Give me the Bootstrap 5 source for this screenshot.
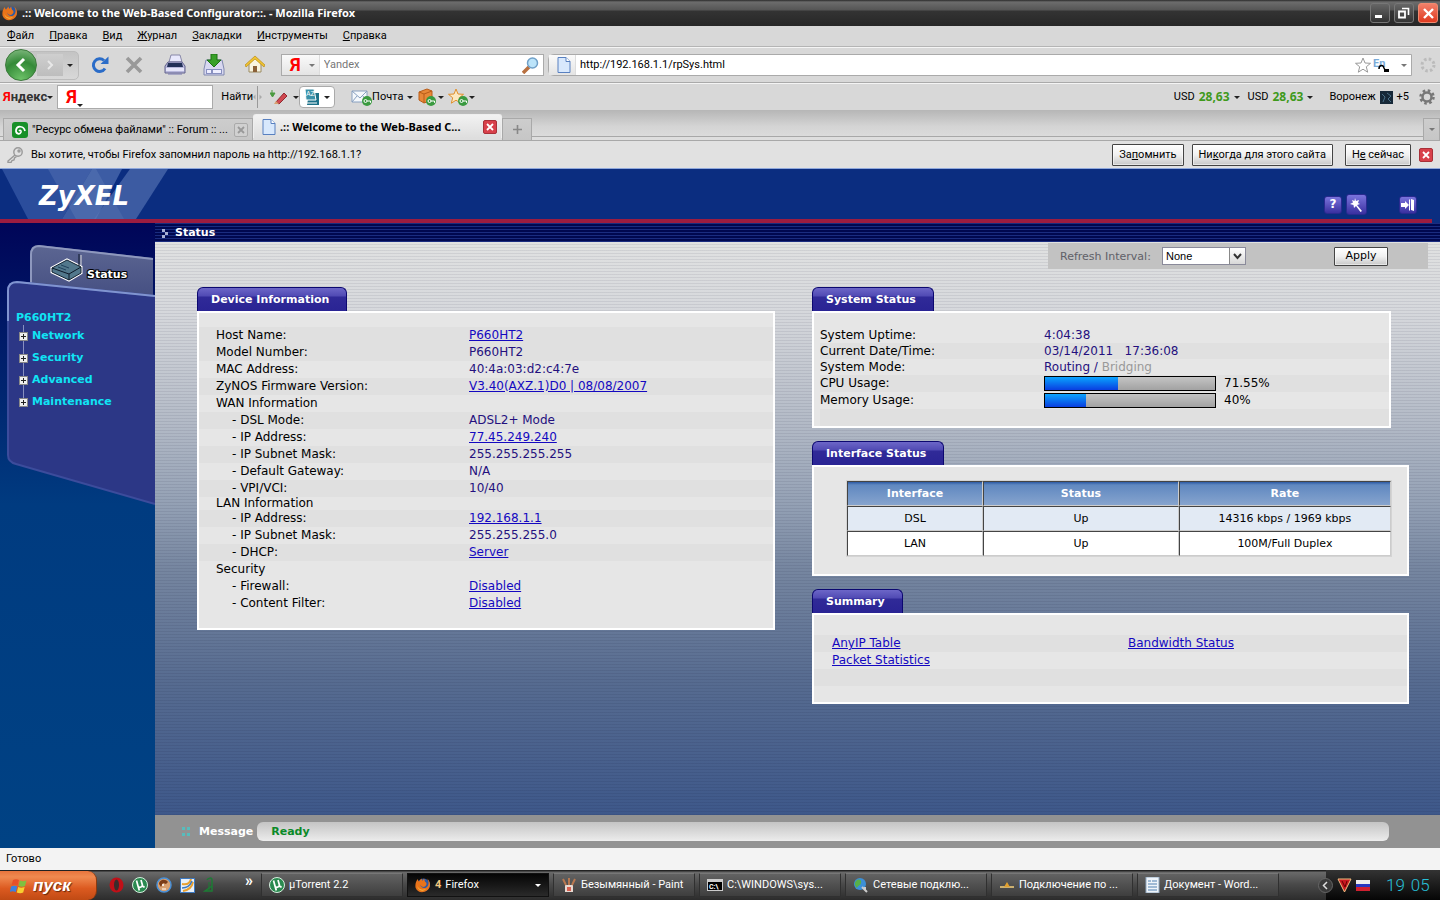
<!DOCTYPE html>
<html lang="ru">
<head>
<meta charset="utf-8">
<meta name="viewport" content="width=device-width, initial-scale=1">
<title>.:: Welcome to the Web-Based Configurator::.</title>
<link rel="stylesheet" href="https://cdn.jsdelivr.net/npm/bootstrap@5.3.0/dist/css/bootstrap.min.css">
<style>
body{font:11px/14px Roboto,"Liberation Sans",sans-serif;color:#000;background:#d8d8d8;min-height:100vh}
svg{flex:none;display:block}
button{font:inherit}
.plain{border:0;background:none;padding:0;color:inherit;display:flex;align-items:center}
.arr{width:0;height:0;border:3px solid transparent;border-top:3px solid #222;border-bottom:0;flex:none}
.arr.dim{border-top-color:#777}

/* window frame */
.titlebar{height:26px;background:linear-gradient(#2a2a2a 0,#6c6c6c 2px,#555 10px,#333 11px,#272727);color:#fff;font:bold 11px/14px "Noto Sans",sans-serif;padding:0 2px}
.wbtn{width:20px;height:20px;border:1px solid #777;border-radius:3px;background:linear-gradient(#666,#333);justify-content:center}
.wbtn.close-w{border-color:#f08a70;background:linear-gradient(#f0806a,#e03a20)}
.menus{height:21px;padding-left:7px;gap:15px;border-bottom:1px solid #b4b4b4}
.menus a{color:#000;text-decoration:none}
.navtools{height:36px;border-top:1px solid #f4f4f4;border-bottom:1px solid #aaa;padding:0 4px 0 6px}
.backpill{height:29px;border:1px solid #bcbcbc;border-radius:14px 5px 5px 14px;background:linear-gradient(#c4c4c4,#d8d8d8);width:73px;gap:0}
.backbtn{width:32px;height:32px;border-radius:50%;border:1px solid #3c7a3c;background:radial-gradient(circle at 50% 100%,#6fc46a,#348a38 55%,#8cc08a);justify-content:center;flex:none;margin-left:-2px}
.fwdbtn{width:26px;height:22px;justify-content:center;background:linear-gradient(#cfcfcf,#bdbdbd)}
.field{height:22px;border:1px solid #aaa;background:#fff}
.field input{border:0;outline:0;background:none;padding:0;min-width:0;font:inherit;color:#000}
.field input::placeholder{color:#777;opacity:1}
.searchbox{width:263px}
.chip{height:20px;background:linear-gradient(#fafafa,#e4e4e4);border-right:1px solid #ddd}
.ya-y{color:#f00;font:18px/20px "Liberation Sans Narrow",Roboto,sans-serif}
.yabar{height:27px;border-top:1px solid #f4f4f4;padding:0 3px}
.yabox{width:156px;height:24px}
.yalogo{font:bold 13px/20px "Liberation Sans Narrow",Roboto,sans-serif;color:#333}
.yalogo span{color:#f00}
.rate{color:#3f9a1c;font:bold 12px/14px "Noto Sans",sans-serif}
.tabstrip{height:30px;background:linear-gradient(#b6b6b6,#d4d4d4 60%,#dcdcdc);border-bottom:3px solid #dedede;box-shadow:inset 0 -1px 0 #a8a8a8;padding:4px 0 0 3px}
.btab{height:22px;border:1px solid #a9a9a9;border-bottom:0;background:linear-gradient(#cdcdcd,#c6c6c6)}
.btab.on{height:24px;border-color:#eee;background:linear-gradient(#f2f2f2,#dedede);font:bold 11px/14px "Noto Sans",sans-serif;border-radius:3px 3px 0 0}
.xred{width:14px;height:14px;border:1px solid #a83038;border-radius:2px;background:#d8404a;justify-content:center}
.xgray{width:14px;height:14px;border:1px solid #aaa;border-radius:2px;background:#d0d0d0;justify-content:center;color:#999}
.notif{height:29px;background:#e1e1e1;border-top:1px solid #a8a8a8;border-bottom:1px solid #8fa8dc;padding:0 7px}
.xpb{height:22px;border:1px solid #444;border-radius:1px;background:linear-gradient(#fff,#f0f0f0 50%,#c8c8c8);padding:0 6px;white-space:nowrap;color:#000;box-shadow:inset 0 0 0 1px #fff8}

/* configurator */
.cfg{font:12px/17px "DejaVu Sans",sans-serif}
.banner{height:54px;background:#0b2d80}
.banner .logoart{width:200px;height:50px}
.bannertools{padding-right:23px;gap:4px}
.redline{height:4px;background:#9c1c40;margin-right:8px}
.sq{width:18px;height:18px;border-radius:3px;background:linear-gradient(#7a74dc,#3a30a0);justify-content:center;border:1px solid #2a2a90}
.sq.big{width:21px;height:21px}
.side{width:155px;background:linear-gradient(#000558,#003b80 45%,#004284);flex:none}
.side .art{position:absolute;left:0;top:0;z-index:0}
.tree{position:relative;z-index:1;padding:84px 0 0 16px;font:bold 11px/22px "DejaVu Sans",sans-serif}
.tree ul{list-style:none;margin:-4px 0 0 3px;padding:0;position:relative}
.tree ul::before{content:"";position:absolute;left:4px;top:0;bottom:14px;width:1px;background:#8890c0}
.tree a,.tree div{color:#10e4f4;text-decoration:none}
.plus{position:relative;width:9px;height:9px;background:#eee;border:1px solid #888;color:#000}
.plus::before,.plus::after{content:"";position:absolute;background:#222;left:1px;top:3px;width:5px;height:1px}
.plus::after{left:3px;top:1px;width:1px;height:5px}
.crumb{height:19px;background:repeating-linear-gradient(#1a2c80 0 1px,#000850 1px 3px);color:#fff;font:bold 11px/19px "DejaVu Sans",sans-serif;padding-left:7px;gap:6px}
.stage{padding-top:1px;background:repeating-linear-gradient(#fff0 0 2px,#00002012 2px 3px),linear-gradient(#e0e1e1 0,#d6d8dc 12%,#b4bbc7 31%,#93a0b4 46%,#7686a0 57%,#566b90 77%,#3e588a 100%)}
.refresh{height:26px;width:380px;background:#c2c2c2;color:#606068;margin-right:12px;padding:0 40px 0 12px;font-size:11px}
.refresh label{width:102px}
.refresh .pick{width:84px;height:18px;border:1px solid #8a8a9a;background:#fff}
.refresh select{appearance:none;border:0;padding:0 0 0 3px;height:16px;width:66px;background:none;font:11px/14px "Liberation Sans",sans-serif;color:#000;outline:0}
.pick .dd{width:16px;height:16px;border-left:1px solid #888;background:linear-gradient(#fff,#d8d8d8)}
.apply{width:54px;height:19px;font:11px/16px "DejaVu Sans",sans-serif}
.boards{display:grid;grid-template-columns:578fr 597fr;column-gap:37px;padding:18px 31px 0 42px}
.tabhead{display:inline-block;height:24px;border:1px solid #0c0870;border-bottom:0;border-radius:6px 6px 0 0;background:linear-gradient(#6c66c8 0,#504ab4 8px,#302a98 9px,#2a2494);color:#fff;font:bold 11px/24px "DejaVu Sans",sans-serif;padding:0 17px 0 13px;vertical-align:top}
.board{border:2px solid #fff;background:#e6e6e6;margin-bottom:13px}
.b-device{padding:14px 0 16px}
.b-system{padding:14px 0 0 6px;margin-right:18px}
.b-iface{padding-bottom:17px}
.b-sum{padding:20px 0 16px}
.info{width:100%;border-collapse:collapse}
.info th,.info td{padding:0;font-weight:400;height:17px;line-height:17px}
.info th{text-align:left;color:#000}
.info td{color:#24107e}
.cfg a.lnk{color:#1408c0}
.info .dk{background:#e0e0e0}
.info .lo th,.info .lo td{height:13px;line-height:13px}
.sys tr.s th,.sys tr.s td{height:16px;line-height:16px}
.off{color:#999}
.meter{width:172px;height:15px;border:1px solid #000;background:linear-gradient(#c4c4c4,#a2a2a2)}
.meter div{height:100%;background:linear-gradient(#0aa4ff,#0a3ee0)}
.iface{width:calc(100% - 47px);margin:13px 15px 0 32px;border-collapse:separate;border-spacing:0;border:1px solid #d4d4d4;background:#fff;text-align:center;font-size:11px}
.iface th,.iface td{border:1px solid #ccc;border-top-color:#444;border-left-color:#444;height:25px;padding:0}
.iface th{background:linear-gradient(#2c5aa4 0,#6088c0 3px,#86a4ce);color:#fff}
.iface .alt{background:#e2eaf4}
.msgbar{height:33px;background:#929292;color:#fff;font:bold 11px/17px "DejaVu Sans",sans-serif;padding:0 51px 0 27px}
.msgtext{height:19px;border-radius:6px;background:linear-gradient(#c4c4c4,#ececec);color:#0a8a28;padding-left:14px;line-height:20px}
.dots{width:9px;height:9px;display:grid;grid-template-columns:3px 3px;gap:2px}
.dots i{background:#58bcbc;height:3px}

/* status bar and taskbar */
.statusline{height:22px;background:#f3f3f3;padding:0 6px}
.taskbar{height:30px;background:linear-gradient(#222 0,#222 1px,#6a6a6a 2px,#4a4a4a 14px,#2c2c2c);color:#fff}
.startb{width:97px;height:29px;margin-top:1px;background:linear-gradient(#e8743c,#f08a50 20%,#dc5a20 60%,#c04a14);border-radius:0 9px 9px 0;border-right:1px solid #8a3a10;color:#fff;font:italic bold 17px/22px "Liberation Sans",sans-serif;gap:5px;padding-left:10px;text-shadow:1px 1px 1px #0008}
.task{height:24px;flex:1 1 0;min-width:0;background:linear-gradient(#626262,#3e3e3e);border:1px solid #303030;border-top-color:#777;color:#fff;padding:0 7px;display:flex;align-items:center;gap:4px;white-space:nowrap;text-align:left}
.task.on{background:linear-gradient(#050505,#2a2a2a);border-color:#111}
.task b{color:#f4c880}
.task .arr{border-top-color:#fff}
.tasks{width:1018px;gap:4px}
.tray{width:114px;height:30px;background:linear-gradient(#333,#050505);margin-left:auto}
.tray .plain{margin-left:-8px}
.clock{color:#28c0d8;font:300 17px/20px Roboto,sans-serif;gap:6px}
</style>
</head>
<body class="d-flex flex-column">
<svg width="0" height="0" class="position-absolute" aria-hidden="true">
  <symbol id="ff" viewBox="0 0 16 16"><circle cx="8.500" cy="8" r="6.500" fill="#2a5aa8"/><path d="M9 1.500c1 1 0 3 2 4 1 1 .5 3-1 4-2 1-4 0-5-2 1 4 6 5 8 1 1-2 .6-5-1-7 4 3 4 9 0 12-4 3-10 2-11.500-3C0 7 1 4 3 2c0 1 .2 2 1 2.500 1-.8 1-2 3-3-.4 1-.2 1.700.4 2.200C8 3.200 8.500 2.500 9 1.500z" fill="#e8731a"/><path d="M2 8c1 4 5 6 9 4-3 3-8 2-9-4z" fill="#f8c040"/></symbol>
  <symbol id="page" viewBox="0 0 14 16"><path d="M1 .5h8l4 4v11H1z" fill="#d8e8fc" stroke="#5880c0"/><path d="M9 .5v4h4" fill="#fff" stroke="#5880c0"/></symbol>
  <symbol id="xx" viewBox="0 0 8 8"><path d="M1 1l6 6M7 1L1 7" stroke="currentColor" stroke-width="1.800"/></symbol>
  <symbol id="key" viewBox="0 0 10 10"><circle cx="5" cy="5" r="5" fill="#3a9a40"/><circle cx="3.500" cy="5" r="1.500" fill="none" stroke="#fff"/><path d="M5 5h3.500v1.800" fill="none" stroke="#fff"/></symbol>
  <symbol id="ut" viewBox="0 0 16 16"><circle cx="8" cy="8" r="7.500" fill="#2a8a50" stroke="#d8f0e0"/><path d="M4.500 3.500l1.500 5.500c.6 2 3.300 1.600 4-.2M9 3l1.700 6c.3 1 1.200 1 2 .5M6 9l1.300 4.500" fill="none" stroke="#fff" stroke-width="1.700"/></symbol>
</svg>

<header>
  <div class="titlebar d-flex align-items-center">
    <svg width="16" height="16"><use href="#ff"/></svg>
    <span class="ms-1">.:: Welcome to the Web-Based Configurator::. - Mozilla Firefox</span>
    <div class="d-flex gap-1 ms-auto">
      <button class="plain wbtn" aria-label="Свернуть"><svg width="12" height="12"><path d="M1 8h7v3H1z" fill="#fff"/></svg></button>
      <button class="plain wbtn" aria-label="Восстановить"><svg width="12" height="12" fill="none" stroke="#fff"><path d="M1 4.500h6v6H1z" stroke-width="1.800"/><path d="M4 1.500h6.500V8" stroke-width="1.600"/></svg></button>
      <button class="plain wbtn close-w" aria-label="Закрыть"><svg width="13" height="13"><path d="M2 2l9 9M11 2l-9 9" stroke="#fff" stroke-width="2.400"/></svg></button>
    </div>
  </div>
  <nav class="menus d-flex align-items-center">
    <a href="#"><u>Ф</u>айл</a><a href="#"><u>П</u>равка</a><a href="#"><u>В</u>ид</a><a href="#"><u>Ж</u>урнал</a><a href="#"><u>З</u>акладки</a><a href="#"><u>И</u>нструменты</a><a href="#"><u>С</u>правка</a>
  </nav>

  <div class="navtools d-flex align-items-center">
    <div class="backpill d-flex align-items-center">
      <button class="plain backbtn" aria-label="Назад"><svg width="14" height="16"><path d="M10 2L4 8l6 6" fill="none" stroke="#fff" stroke-width="3"/></svg></button>
      <button class="plain fwdbtn" aria-label="Вперёд"><svg width="8" height="10"><path d="M2 1l4 4-4 4" fill="none" stroke="#e8e8e8" stroke-width="2"/></svg></button>
      <span class="arr ms-1"></span>
    </div>
    <button class="plain ms-2 ps-1" aria-label="Обновить"><svg width="18" height="18"><path d="M14 12.500A6.300 6.300 0 1 1 13 4.500" fill="none" stroke="#2a6cc8" stroke-width="3"/><path d="M9.500 8h8V.5z" fill="#2a6cc8"/></svg></button>
    <button class="plain ms-3" aria-label="Остановить"><svg width="18" height="18"><path d="M2 2l14 14M16 2L2 16" stroke="#999" stroke-width="3.600"/></svg></button>
    <button class="plain ms-3 ps-1" aria-label="Печать"><svg width="24" height="22"><path d="M6 8l2-7h9l2 7z" fill="#e8e8fc" stroke="#8888a8"/><path d="M5 8h14l3 4v7H2v-7z" fill="#b8b8dc" stroke="#62628c"/><path d="M5 9h14l1 4H4z" fill="#223058"/><path d="M3 14h18v3H3z" fill="#e6e6fa"/><path d="M5 20h14" stroke="#7878b0"/></svg></button>
    <button class="plain ms-3" aria-label="Сохранить"><svg width="22" height="22"><path d="M3 6h16l2 9v6H1v-6z" fill="#d8d8f0" stroke="#8088b0"/><path d="M3 15h16v5H3z" fill="#8890c0"/><path d="M4 16h4v3H4zM10 16h8v3h-8z" fill="#eef"/><path d="M8 0h6v6h4l-7 7-7-7h4z" fill="#38a028" stroke="#1c7014"/></svg></button>
    <button class="plain ms-3 ps-1" aria-label="Домой"><svg width="20" height="20"><path d="M4 9v8h12V9l-6-6z" fill="#f8f4e0" stroke="#9a8a60"/><path d="M8 11h4v6H8z" fill="#8a6038"/><path d="M0 10L10 1l10 9-1 2-9-8-9 8z" fill="#f0c430" stroke="#b88a18" stroke-width=".7"/></svg></button>
    <div class="field searchbox d-flex align-items-center ms-3">
      <button class="plain chip ps-2 pe-1" aria-label="Поисковая система"><span class="ya-y fw-bold pe-2">Я</span><span class="arr dim"></span></button>
      <input class="flex-grow-1 ms-1" placeholder="Yandex" aria-label="Поиск">
      <svg class="me-1" width="17" height="17"><path d="M1 16l6-6" stroke="#b87040" stroke-width="3.500"/><circle cx="10.500" cy="6" r="5" fill="#bce4fa" stroke="#70a0c8" stroke-width="1.500"/></svg>
    </div>
    <div class="field d-flex align-items-center flex-grow-1 rounded-start ms-1">
      <span class="chip d-flex align-items-center ps-2 pe-1 me-1"><svg width="14" height="16"><use href="#page"/></svg></span>
      <input class="flex-grow-1" value="http://192.168.1.1/rpSys.html" aria-label="Адрес">
      <svg width="16" height="16"><path d="M8 1l2 5 5.500.300-4.200 3.500 1.400 5.400L8 12.200l-4.700 3L4.700 9.800.5 6.300 6 6z" fill="none" stroke="#999"/></svg>
      <svg class="me-2" width="22" height="20"><text x="2" y="12" font-size="11" font-weight="bold" fill="#7aaad8">En</text><path d="M8 14c0-4 4-5 5-1l1 2" fill="none" stroke="#000" stroke-width="1.500"/><path d="M13 14h5v3h-5z"/></svg>
      <span class="arr dim me-1"></span>
    </div>
    <svg class="ms-2" width="16" height="16"><circle cx="8" cy="8" r="6" fill="none" stroke="#bbb" stroke-width="3" stroke-dasharray="2.500 2.210"/></svg>
  </div>

  <div class="yabar d-flex align-items-center">
    <button class="plain"><span class="yalogo"><span>Я</span>ндекс</span><span class="arr"></span></button>
    <div class="field yabox d-flex align-items-center ms-1 ps-2">
      <span class="ya-y fw-bold">Я</span><span class="arr mt-3"></span><input class="flex-grow-1" aria-label="Яндекс поиск">
    </div>
    <button class="plain ms-2">Найти</button>
    <svg width="9" height="22"><path d="M4.500 0v22" stroke="#999"/><path d="M2.500 8.500L0 11l2.500 2.500zM6.500 8.500L9 11l-2.500 2.500z" fill="#aaa"/></svg>
    <button class="plain ms-2 gap-1" aria-label="Маркер"><svg width="19" height="18"><path d="M2 2v4M0 5h5L2.500 9z" fill="#4a9a40" stroke="#4a9a40"/><path d="M6 14l8-9 3 3-8 8z" fill="#d04850" stroke="#902830"/><path d="M4 16l2-3 3 3z" fill="#d8a070"/></svg><span class="arr"></span></button>
    <button class="plain field rounded-1 px-1 gap-1" aria-label="Словарь"><svg width="16" height="18"><path d="M5 5h10v12H3z" fill="#1c7088"/><path d="M1 1h9l2 11H2z" fill="#3a90a8" stroke="#fff"/><text x="2" y="8" font-size="7" fill="#fff">AZ</text><path d="M3 15h10" stroke="#fff"/></svg><span class="arr"></span></button>
    <button class="plain ms-3"><svg width="21" height="18"><path d="M1 3h15v11H1z" fill="#f4f8fc" stroke="#88a0c0"/><path d="M1 3l8 7 7-7M1 14l5-6M16 14l-4-6" fill="none" stroke="#88a0c0"/><use href="#key" x="11" y="8" width="10" height="10"/></svg><span class="pe-1">Почта</span><span class="arr"></span></button>
    <button class="plain ms-1" aria-label="Закладки"><svg width="21" height="18"><path d="M2 4l8-3 5 2v9l-8 3-5-3z" fill="#e88838" stroke="#b85c18"/><path d="M2 4l5 2 8-3M7 6v9" stroke="#b85c18" fill="none"/><use href="#key" x="9" y="8" width="10" height="10"/></svg><span class="arr"></span></button>
    <button class="plain ms-1" aria-label="Избранное"><svg width="21" height="18"><path d="M8 1l2 5 5.500.300-4.200 3.500 1.400 5.400L8 12.200l-4.700 3L4.700 9.800.5 6.300 6 6z" fill="#fce8c0" stroke="#e0902c"/><use href="#key" x="10" y="8" width="10" height="10"/></svg><span class="arr"></span></button>
    <div class="d-flex align-items-center ms-auto">
      <span>USD</span><span class="rate mx-1">28,63</span><span class="arr me-2"></span>
      <span>USD</span><span class="rate mx-1">28,63</span><span class="arr me-3"></span>
      <span>Воронеж</span>
      <svg class="mx-1" width="13" height="13"><path d="M0 0h13v13H0z" fill="#162838"/><path d="M2 3l3 3-2 5M7 2l4 3-3 3 3 3" stroke="#4a7088" fill="none"/></svg>
      <span class="me-2">+5</span>
      <svg width="20" height="16"><circle cx="10" cy="8" r="4.500" fill="none" stroke="#777" stroke-width="2.500"/><circle cx="10" cy="8" r="6.500" fill="none" stroke="#777" stroke-width="2.500" stroke-dasharray="2.550 2.550"/></svg>
    </div>
  </div>

  <div class="tabstrip d-flex">
    <div class="btab d-flex align-items-center ps-2 pe-1 mt-1" style="width:250px">
      <svg width="16" height="16"><path d="M0 3a3 3 0 0 1 3-3h10a3 3 0 0 1 3 3v10a3 3 0 0 1-3 3H3a3 3 0 0 1-3-3z" fill="#189028"/><path d="M13 9c-1-5-8-6-9-1-.4 4 4 5 5 2 .4-1.500-1-2-2-1" fill="none" stroke="#fff" stroke-width="1.700"/></svg>
      <span class="ms-1 flex-grow-1 text-nowrap">"Ресурс обмена файлами" :: Forum :: ...</span>
      <button class="plain xgray" aria-label="Закрыть вкладку"><svg width="8" height="8"><use href="#xx"/></svg></button>
    </div>
    <div class="btab on d-flex align-items-center ps-2 pe-1" style="width:249px">
      <svg width="14" height="16"><use href="#page"/></svg>
      <span class="ms-1 flex-grow-1 text-nowrap">.:: Welcome to the Web-Based C...</span>
      <button class="plain xred text-white" aria-label="Закрыть вкладку"><svg width="8" height="8"><use href="#xx"/></svg></button>
    </div>
    <button class="plain btab justify-content-center mt-1" style="width:30px" aria-label="Новая вкладка"><svg width="9" height="9"><path d="M4.500 0v9M0 4.500h9" stroke="#888" stroke-width="1.600"/></svg></button>
    <button class="plain btab justify-content-center ms-auto mt-1" style="width:17px" aria-label="Список вкладок"><span class="arr dim"></span></button>
  </div>

  <div class="notif d-flex align-items-center">
    <svg width="16" height="16" fill="none" stroke="#999" stroke-width="1.400"><circle cx="11" cy="5" r="4.200"/><path d="M8 8l-7 6v1.500h3l1-2 2-.5.5-2 2-1.500"/><circle cx="12" cy="4" r="1"/></svg>
    <span class="ms-2 me-auto">Вы хотите, чтобы Firefox запомнил пароль на http://192.168.1.1?</span>
    <button class="xpb">За<u>п</u>омнить</button>
    <button class="xpb mx-2"><span>Ни<u>к</u>огда для этого сайта</span></button>
    <button class="xpb ms-1">Н<u>е</u> сейчас</button>
    <button class="plain xred text-white ms-2" aria-label="Закрыть"><svg width="8" height="8"><use href="#xx"/></svg></button>
  </div>
</header>

<main class="cfg d-flex flex-column flex-grow-1">
  <div class="banner d-flex flex-column">
    <div class="d-flex justify-content-between align-items-end">
      <svg class="logoart" viewBox="0 0 200 50" role="img" aria-label="ZyXEL"><path d="M2 0h90l-30 50H28z" fill="#2b4d9c"/><path d="M92 0h30L96 50H62z" fill="#3c5ca4"/><path d="M48 0h48l28 50H76z" fill="#6c88c0" opacity=".3"/><path d="M130 0h38l-32 50H94z" fill="#5874b4" opacity=".65"/><text x="39" y="36" font-family="DejaVu Sans,sans-serif" font-size="26" font-weight="bold" font-style="italic" fill="#fff">ZyXEL</text></svg>
      <div class="bannertools d-flex align-items-center pb-1">
        <button class="plain sq text-white fw-bold" aria-label="Справка">?</button>
        <button class="plain sq big me-4" aria-label="Мастер"><svg width="15" height="15"><path d="M6 1l1 3 3-1-1 3 2 1-3 1 5 6-1.500 1L7 9l-2 2-.5-3L1 7l3-1.500L3 3l2.500 1z" fill="#fff"/></svg></button>
        <button class="plain sq ms-1" aria-label="Выход"><svg width="14" height="12"><path d="M0 4h4V2l4 4-4 4V8H0z" fill="#fff"/><path d="M8 .5h1v11H8zM10 0l3 1v11l-3-1z" fill="#fff"/></svg></button>
      </div>
    </div>
    <div class="redline"></div>
  </div>
  <div class="d-flex flex-grow-1">
    <aside class="side position-relative">
      <svg class="art" width="155" height="290" viewBox="0 0 155 290" aria-hidden="true">
        <defs><linearGradient id="g1" x2="0" y2="1"><stop stop-color="#5c6692"/><stop offset="1" stop-color="#3c467c"/></linearGradient></defs>
        <path d="M30 70V32q0-10 8-10l115 13v60z" fill="url(#g1)"/><path d="M31 62V32q0-9 8-9l114 13" fill="none" stroke="#8e98be" stroke-width="2"/>
        <path d="M8 232V68q0-9 9-9l138 14v208L16 241q-8-2-8-9z" fill="#2c3786"/><path d="M155 73L17 59q-9 0-9 9v164q0 7 8 9l139 40" fill="none" stroke="#3c4c9c" stroke-width="2"/><path d="M155 73L17 59q-9 0-9 9v30" fill="none" stroke="#8094d0" stroke-width="2"/>
        <path d="M52 45l15-8 14 7v6l-12 7-17-8z" fill="#52788c" stroke="#fff" stroke-width="3"/><path d="M52 45l15-8 14 7v6l-12 7-17-8z" fill="#52788c" stroke="#102030" stroke-width="1"/><path d="M52 45l17 6 12-7M69 51v6M79 43V31" fill="none" stroke="#0c1828"/><path d="M81 42V32" stroke="#ddd"/><path d="M58 44l8 3M61 42l8 3" stroke="#20405c"/>
        <text x="87" y="55" font-family="DejaVu Sans,sans-serif" font-weight="bold" font-size="11" fill="#fff" stroke="#000" stroke-width="2" paint-order="stroke">Status</text>
      </svg>
      <nav class="tree">
        <div>P660HT2</div>
        <ul>
          <li class="d-flex align-items-center gap-1"><span class="plus"></span><a href="#">Network</a></li>
          <li class="d-flex align-items-center gap-1"><span class="plus"></span><a href="#">Security</a></li>
          <li class="d-flex align-items-center gap-1"><span class="plus"></span><a href="#">Advanced</a></li>
          <li class="d-flex align-items-center gap-1"><span class="plus"></span><a href="#">Maintenance</a></li>
        </ul>
      </nav>
    </aside>
    <div class="d-flex flex-column flex-grow-1">
      <div class="crumb d-flex align-items-center"><svg width="7" height="10"><path d="M0 1h3v3H0zM3 4h3v3H3zM0 7h3v3H0z" fill="#a8b0d4"/></svg><span>Status</span></div>
      <div class="stage flex-grow-1">
        <div class="refresh d-flex align-items-center ms-auto">
          <label for="ri">Refresh Interval:</label>
          <div class="pick d-flex align-items-center"><select id="ri"><option>None</option></select><span class="dd d-flex align-items-center justify-content-center"><svg width="9" height="7"><path d="M1 1l3.500 4L8 1" fill="none" stroke="#333" stroke-width="2"/></svg></span></div>
          <button class="xpb apply ms-auto">Apply</button>
        </div>
        <div class="boards">
          <section>
            <h2 class="tabhead m-0">Device Information</h2>
            <div class="board b-device">
              <table class="info">
                <colgroup><col style="width:17px"><col style="width:253px"><col></colgroup>
                <tr class="dk"><td></td><th>Host Name:</th><td><a class="lnk" href="#">P660HT2</a></td></tr>
                <tr class="dk"><td></td><th>Model Number:</th><td>P660HT2</td></tr>
                <tr><td></td><th>MAC Address:</th><td>40:4a:03:d2:c4:7e</td></tr>
                <tr class="dk"><td></td><th>ZyNOS Firmware Version:</th><td><a class="lnk" href="#">V3.40(AXZ.1)D0 | 08/08/2007</a></td></tr>
                <tr><td></td><th>WAN Information</th><td></td></tr>
                <tr class="dk"><td></td><th class="ps-3">- DSL Mode:</th><td>ADSL2+ Mode</td></tr>
                <tr><td></td><th class="ps-3">- IP Address:</th><td><a class="lnk" href="#">77.45.249.240</a></td></tr>
                <tr class="dk"><td></td><th class="ps-3">- IP Subnet Mask:</th><td>255.255.255.255</td></tr>
                <tr><td></td><th class="ps-3">- Default Gateway:</th><td>N/A</td></tr>
                <tr class="dk"><td></td><th class="ps-3">- VPI/VCI:</th><td>10/40</td></tr>
                <tr class="lo"><td></td><th>LAN Information</th><td></td></tr>
                <tr class="dk"><td></td><th class="ps-3">- IP Address:</th><td><a class="lnk" href="#">192.168.1.1</a></td></tr>
                <tr><td></td><th class="ps-3">- IP Subnet Mask:</th><td>255.255.255.0</td></tr>
                <tr class="dk"><td></td><th class="ps-3">- DHCP:</th><td><a class="lnk" href="#">Server</a></td></tr>
                <tr><td></td><th>Security</th><td></td></tr>
                <tr><td></td><th class="ps-3">- Firewall:</th><td><a class="lnk" href="#">Disabled</a></td></tr>
                <tr><td></td><th class="ps-3">- Content Filter:</th><td><a class="lnk" href="#">Disabled</a></td></tr>
              </table>
            </div>
          </section>
          <div>
            <section>
              <h2 class="tabhead m-0">System Status</h2>
              <div class="board b-system">
                <table class="info sys">
                  <colgroup><col style="width:224px"><col></colgroup>
                  <tr class="s"><th>System Uptime:</th><td>4:04:38</td></tr>
                  <tr class="s dk"><th>Current Date/Time:</th><td>03/14/2011 &nbsp; 17:36:08</td></tr>
                  <tr class="s"><th>System Mode:</th><td>Routing / <span class="off">Bridging</span></td></tr>
                  <tr class="dk"><th>CPU Usage:</th><td><div class="d-flex align-items-center gap-2 text-black"><div class="meter"><div style="width:43%"></div></div>71.55%</div></td></tr>
                  <tr><th>Memory Usage:</th><td><div class="d-flex align-items-center gap-2 text-black"><div class="meter"><div style="width:24%"></div></div>40%</div></td></tr>
                  <tr class="dk"><th></th><td></td></tr>
                </table>
              </div>
            </section>
            <section>
              <h2 class="tabhead m-0">Interface Status</h2>
              <div class="board b-iface">
                <table class="iface">
                  <colgroup><col style="width:25%"><col style="width:36%"><col></colgroup>
                  <tr><th>Interface</th><th>Status</th><th>Rate</th></tr>
                  <tr class="alt"><td>DSL</td><td>Up</td><td>14316 kbps / 1969 kbps</td></tr>
                  <tr><td>LAN</td><td>Up</td><td>100M/Full Duplex</td></tr>
                </table>
              </div>
            </section>
            <section>
              <h2 class="tabhead m-0">Summary</h2>
              <div class="board b-sum">
                <table class="info">
                  <colgroup><col style="width:18px"><col style="width:296px"><col></colgroup>
                  <tr class="dk"><td></td><td><a class="lnk" href="#">AnyIP Table</a></td><td><a class="lnk" href="#">Bandwidth Status</a></td></tr>
                  <tr><td></td><td><a class="lnk" href="#">Packet Statistics</a></td><td></td></tr>
                  <tr class="dk"><td></td><td></td><td></td></tr>
                </table>
              </div>
            </section>
          </div>
        </div>
      </div>
      <div class="msgbar d-flex align-items-center"><span class="dots"><i></i><i></i><i></i><i></i></span><span class="ms-2">Message</span><div class="msgtext flex-grow-1 ms-1">Ready</div></div>
    </div>
  </div>
</main>

<footer>
  <div class="statusline d-flex align-items-center">Готово</div>
  <div class="taskbar d-flex align-items-center">
    <button class="plain startb"><svg width="18" height="18"><path d="M3 3c2-1 4-1 6 0L7.500 8.500c-2-1-4-1-6 0z" fill="#e85028"/><path d="M10 3.500c2 1 4 1 6.500 0L15 9c-2 1-4 1-6.500 0z" fill="#80c040"/><path d="M1.200 9.500c2-1 4-1 6 0L5.700 15c-2-1-4-1-6 0z" fill="#3c80e0"/><path d="M8.200 10c2 1 4 1 6.500 0l-1.500 5.500c-2 1-4 1-6.500 0z" fill="#f8d030"/></svg>пуск</button>
    <div class="d-flex align-items-center ms-2 ps-1">
      <a href="#" class="me-2" aria-label="Opera"><svg width="15" height="16"><ellipse cx="7.500" cy="8" rx="7" ry="7.500" fill="#c01018"/><ellipse cx="7.500" cy="8" rx="2.500" ry="5.500" fill="#3a2c2c"/></svg></a>
      <a href="#" class="me-2" aria-label="µTorrent"><svg width="16" height="16"><use href="#ut"/></svg></a>
      <a href="#" class="me-2" aria-label="Браузер"><svg width="16" height="16"><circle cx="8" cy="8" r="7" fill="#d8a070" stroke="#4890d8" stroke-width="1.500"/><path d="M3 7c0-4 6-6 9-2l-2 2-3-1-2 4z" fill="#7a3c18"/><circle cx="7" cy="8" r="1" fill="#fff"/><path d="M6 12h4" stroke="#fff"/></svg></a>
      <a href="#" class="me-2" aria-label="Почта"><svg width="15" height="15"><path d="M0 0h15v15H0z" fill="#3c78c0"/><path d="M1 1h13v13H1z" fill="#e8f0fa"/><path d="M2 6c5 1 8-1 9-5M3 13c6-1 9-4 10-9" fill="none" stroke="#e8a030" stroke-width="2"/><path d="M2 10c5 0 8-2 10-7" fill="none" stroke="#3c78c0" stroke-width="1.500"/></svg></a>
      <a href="#" aria-label="Документы"><svg width="14" height="16"><path d="M4 3c1-2 5-3 5 0v11H2l7-5" fill="none" stroke="#1c7c34" stroke-width="1.500"/><path d="M6 5v8" stroke="#1c7c34"/></svg></a>
    </div>
    <span class="ms-4 ps-1 pb-2 fw-bold fs-6">»</span>
    <div class="tasks d-flex ms-2">
      <button class="task"><svg width="16" height="16"><use href="#ut"/></svg>µTorrent 2.2</button>
      <button class="task on"><svg width="16" height="16"><use href="#ff"/></svg><b>4</b>Firefox<span class="arr ms-auto"></span></button>
      <button class="task"><svg width="16" height="16"><path d="M4 8h8v7H4z" fill="#e8d8d0"/><path d="M6 10h4v4H6z" fill="#d86050"/><path d="M5 8L2 2M8 8V1M11 8l3-6" stroke="#b87850" stroke-width="2"/></svg>Безымянный - Paint</button>
      <button class="task"><svg width="16" height="14"><path d="M0 1h16v12H0z" fill="#ccc"/><path d="M1 4h14v8H1z" fill="#000"/><text x="2" y="11" font-size="7" font-weight="bold" fill="#fff">C:\</text></svg>C:\WINDOWS\sys...</button>
      <button class="task"><svg width="16" height="16"><circle cx="7" cy="7" r="6" fill="#3c90d8"/><path d="M3 4c3-3 6-1 5 2s-3 2-4 5C2 9 1 6 3 4z" fill="#58b048"/><path d="M9 10l5 5M12 10v3" stroke="#ccc" stroke-width="2"/></svg>Сетевые подклю...</button>
      <button class="task"><svg width="16" height="16"><path d="M1 10h14" stroke="#ccb070" stroke-width="2"/><path d="M5 10l3-5 3 5z" fill="#e0a030"/></svg>Подключение по ...</button>
      <button class="task"><svg width="15" height="16"><path d="M1 0h13v16H1z" fill="#eef4fa" stroke="#90a8c0"/><path d="M3 4h3M7 4h5M3 7h9M3 10h9M3 13h9" stroke="#5080b0"/></svg>Документ - Word...</button>
    </div>
    <div class="tray d-flex align-items-center">
      <button class="plain" aria-label="Показать значки"><svg width="15" height="15"><circle cx="7.500" cy="7.500" r="7" fill="#3a3a3a" stroke="#666"/><path d="M9 4L5.500 7.500 9 11" fill="none" stroke="#ddd" stroke-width="1.500"/></svg></button>
      <svg class="ms-1" width="15" height="16"><path d="M1 2h13L7.500 15z" fill="#c81820" stroke="#f0c080"/><path d="M5 4l3 6 2-6" fill="none" stroke="#600"/></svg>
      <svg class="ms-1" width="14" height="11"><path d="M0 0h14v4H0z" fill="#eee"/><path d="M0 4h14v3H0z" fill="#2838c0"/><path d="M0 7h14v4H0z" fill="#d02030"/></svg>
      <span class="clock d-flex ms-3"><span>19</span><span>05</span></span>
    </div>
  </div>
</footer>
<script src="https://cdn.jsdelivr.net/npm/bootstrap@5.3.0/dist/js/bootstrap.bundle.min.js"></script>
</body>
</html>
